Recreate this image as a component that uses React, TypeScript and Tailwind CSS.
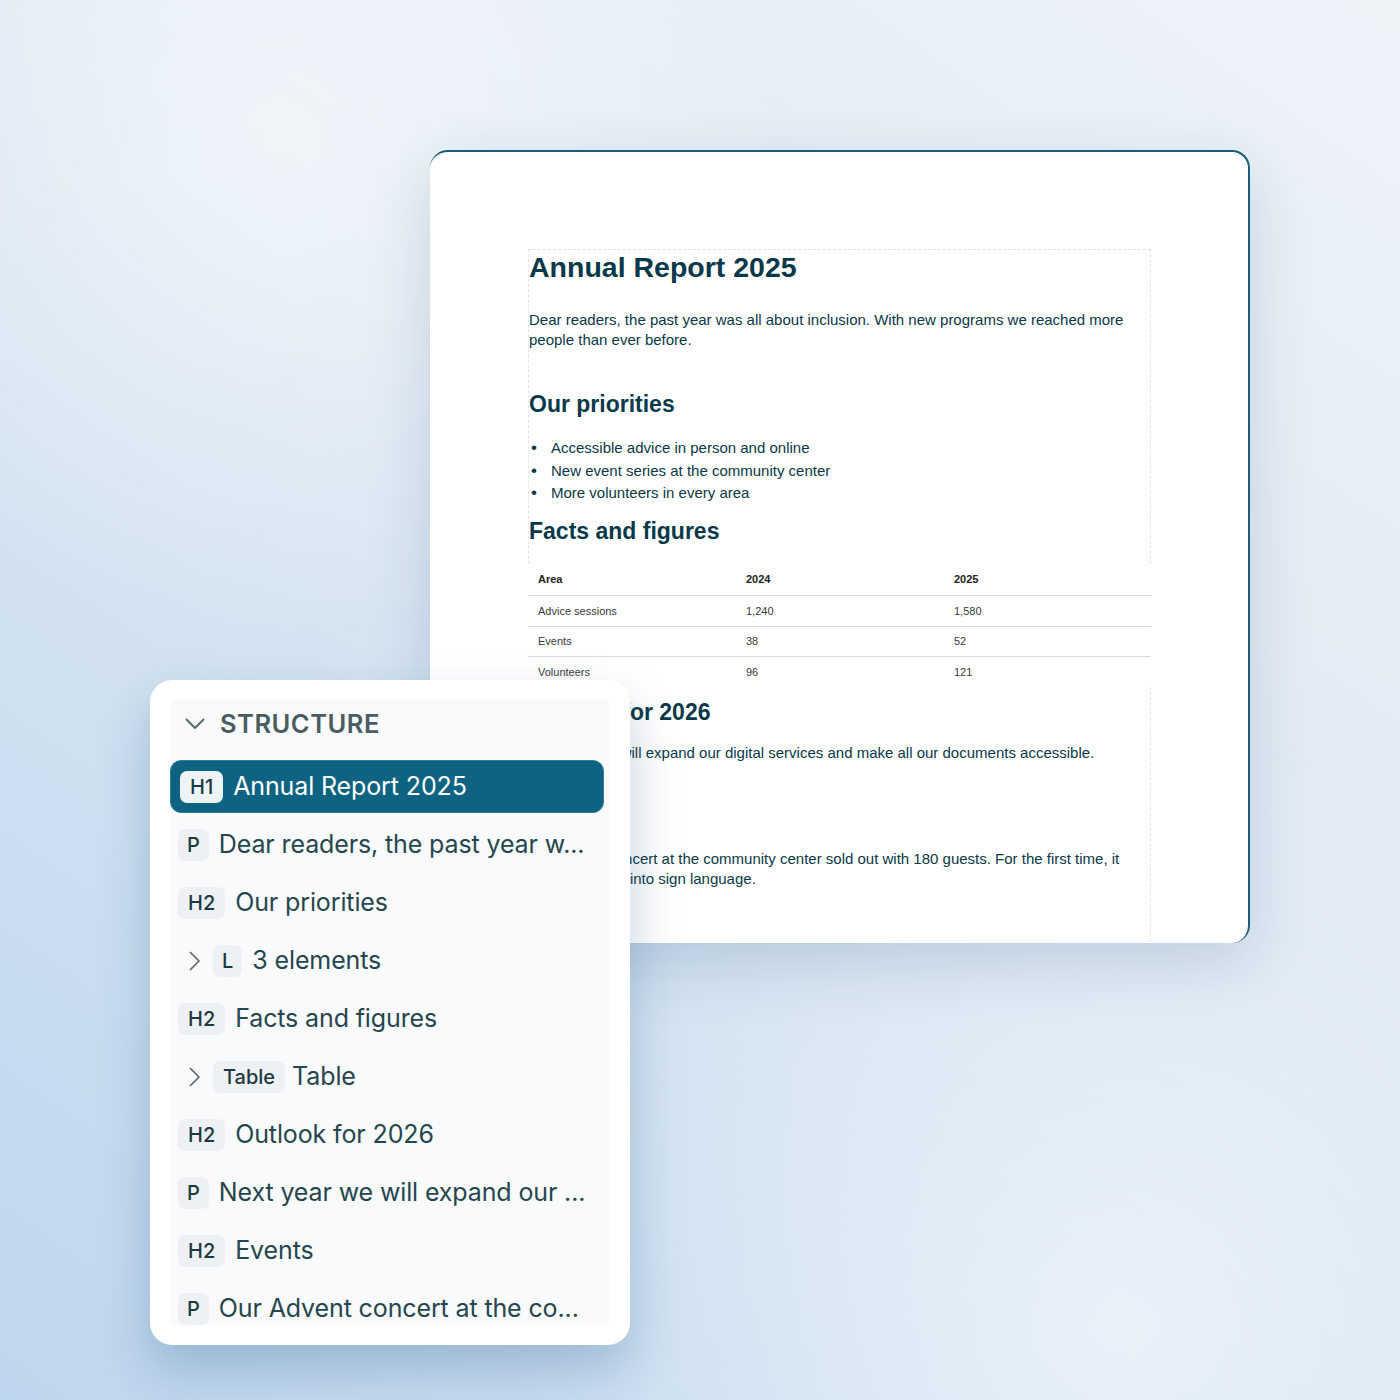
import React from 'react';

type Row = {
  tag: string;
  label: string;
  expandable?: boolean;
  active?: boolean;
};

const rows: Row[] = [
  { tag: 'H1', label: 'Annual Report 2025', active: true },
  { tag: 'P', label: 'Dear readers, the past year w...' },
  { tag: 'H2', label: 'Our priorities' },
  { tag: 'L', label: '3 elements', expandable: true },
  { tag: 'H2', label: 'Facts and figures' },
  { tag: 'Table', label: 'Table', expandable: true },
  { tag: 'H2', label: 'Outlook for 2026' },
  { tag: 'P', label: 'Next year we will expand our ...' },
  { tag: 'H2', label: 'Events' },
  { tag: 'P', label: 'Our Advent concert at the co...' },
];

const tableRows = [
  ['Advice sessions', '1,240', '1,580'],
  ['Events', '38', '52'],
  ['Volunteers', '96', '121'],
];

function ChevronDown() {
  return (
    <svg width="20" height="12" viewBox="0 0 20 12" fill="none" className="text-[#56686e]">
      <path d="M1.5 1.5 L10 10 L18.5 1.5" stroke="currentColor" strokeWidth="1.9" strokeLinecap="round" strokeLinejoin="round" />
    </svg>
  );
}

function ChevronRight() {
  return (
    <svg width="14" height="20" viewBox="0 0 14 20" fill="none" className="text-[#5a6b70]">
      <path d="M2.5 1.5 L11 10 L2.5 18.5" stroke="currentColor" strokeWidth="1.7" strokeLinecap="round" strokeLinejoin="round" />
    </svg>
  );
}

function Badge({ text, active }: { text: string; active?: boolean }) {
  return (
    <span
      className={`flex h-[32px] items-center rounded-[7px] text-[20px] font-medium leading-none ${
        text.length === 1 ? 'px-[9px]' : 'px-[10px]'
      } ${active ? 'bg-[#eef3f5] text-[#173a42]' : 'bg-[#edf1f4] text-[#1c3940]'}`}
    >
      {text}
    </span>
  );
}

function StructureRow({ row }: { row: Row }) {
  if (row.active) {
    return (
      <div className="mr-[6px] flex h-[53px] items-center gap-[10px] rounded-[11px] border border-[#2f7d99] bg-[#0f6382] pl-[9px]">
        <Badge text={row.tag} active />
        <span className="text-[25px] tracking-[-0.005em] text-white">{row.label}</span>
      </div>
    );
  }
  return (
    <div className={`flex h-[53px] items-center ${row.expandable ? 'pl-[18px]' : 'pl-[8px]'}`}>
      {row.expandable && (
        <span className="mr-[11px] flex w-[14px] items-center">
          <ChevronRight />
        </span>
      )}
      <Badge text={row.tag} />
      <span
        className={`${row.tag === 'Table' ? 'ml-[7px]' : 'ml-[10px]'} whitespace-nowrap text-[25px] tracking-[-0.005em] text-[#26464e]`}
      >
        {row.label}
      </span>
    </div>
  );
}

function StructurePanel() {
  return (
    <div className="absolute left-[150px] top-[680px] h-[665px] w-[480px] rounded-[22px] bg-white p-5 shadow-[0_24px_50px_rgba(40,90,140,0.28)]">
      <div className="flex h-full flex-col overflow-hidden rounded-[4px] bg-[#f8fafc] font-['Inter',sans-serif]">
        <div className="flex h-[48px] shrink-0 items-center gap-[15px] pl-[15px]">
          <ChevronDown />
          <span className="text-[25.5px] font-semibold tracking-[0.02em] text-[#485c62]">STRUCTURE</span>
        </div>
        <div className="mt-[12px] flex flex-col gap-[5px]">
          {rows.map((r, i) => (
            <StructureRow key={i} row={r} />
          ))}
        </div>
      </div>
    </div>
  );
}

function DocumentCard() {
  return (
    <div className="h-[793px] w-[820px] overflow-hidden rounded-[18px] border-r-2 border-t-2 border-[#1c5d76] bg-white pl-[98px] pt-[97px] shadow-[0_20px_60px_rgba(40,80,120,0.18)] font-['Liberation_Sans',Arial,sans-serif] text-[#0a3847]">
      <div className="w-[623px] border border-b-0 border-dashed border-[#e2e5e9] pb-[19px]">
        <h1 className="text-[28.5px] font-bold leading-[34px] text-[#08394a]">Annual Report 2025</h1>
        <p className="mt-[26px] text-[15px] leading-[20px]">
          Dear readers, the past year was all about inclusion. With new programs we reached more people than ever before.
        </p>
        <h2 className="mt-[40px] text-[23px] font-bold leading-[28px] text-[#08394a]">Our priorities</h2>
        <ul className="mt-[19px] text-[15px] leading-[22.5px]">
          {['Accessible advice in person and online', 'New event series at the community center', 'More volunteers in every area'].map(
            (t) => (
              <li key={t} className="flex">
                <span className="w-[22px] pl-[2px] text-[17px]">•</span>
                <span>{t}</span>
              </li>
            ),
          )}
        </ul>
        <h2 className="mt-[12px] text-[23px] font-bold leading-[28px] text-[#08394a]">Facts and figures</h2>
      </div>

      <table className="w-[623px] border-collapse text-[11px] text-[#3a3a3a]">
        <thead>
          <tr className="h-[32px] border-b border-[#d9dcdf]">
            <th className="w-[218px] pl-[10px] text-left font-bold text-[#222]">Area</th>
            <th className="w-[208px] text-left font-bold text-[#222]">2024</th>
            <th className="text-left font-bold text-[#222]">2025</th>
          </tr>
        </thead>
        <tbody>
          {tableRows.map((r, i) => (
            <tr key={r[0]} className={`h-[30.5px] ${i < tableRows.length - 1 ? 'border-b border-[#d9dcdf]' : ''}`}>
              <td className="pl-[10px]">{r[0]}</td>
              <td>{r[1]}</td>
              <td>{r[2]}</td>
            </tr>
          ))}
        </tbody>
      </table>

      <div className="h-[300px] w-[623px] border-x border-dashed border-[#e2e5e9]">
        <h2 className="pt-[11px] text-[23px] font-bold leading-[28px] text-[#08394a]">Outlook for 2026</h2>
        <p className="mt-[17px] text-[15px] leading-[20px]">
          Next year we will expand our digital services and make all our documents accessible.
        </p>
        <h2 className="mt-[41px] text-[23px] font-bold leading-[28px] text-[#08394a]">Events</h2>
        <p className="mt-[17px] text-[15px] leading-[20px]">
          Our Advent concert at the community center sold out with 180 guests. For the first time, it was translated into sign language.
        </p>
      </div>
    </div>
  );
}

export default function App() {
  return (
    <div className="relative h-[1400px] w-[1400px] overflow-hidden bg-[radial-gradient(circle_at_20%_10%,rgba(255,255,255,0.5),transparent_30%),radial-gradient(circle_at_80%_95%,rgba(240,246,251,0.75),transparent_35%),linear-gradient(215deg,#eef3f8_0%,#e2ebf4_35%,#bed6ed_100%)] pl-[430px] pt-[150px]">
      <DocumentCard />
      <StructurePanel />
    </div>
  );
}
